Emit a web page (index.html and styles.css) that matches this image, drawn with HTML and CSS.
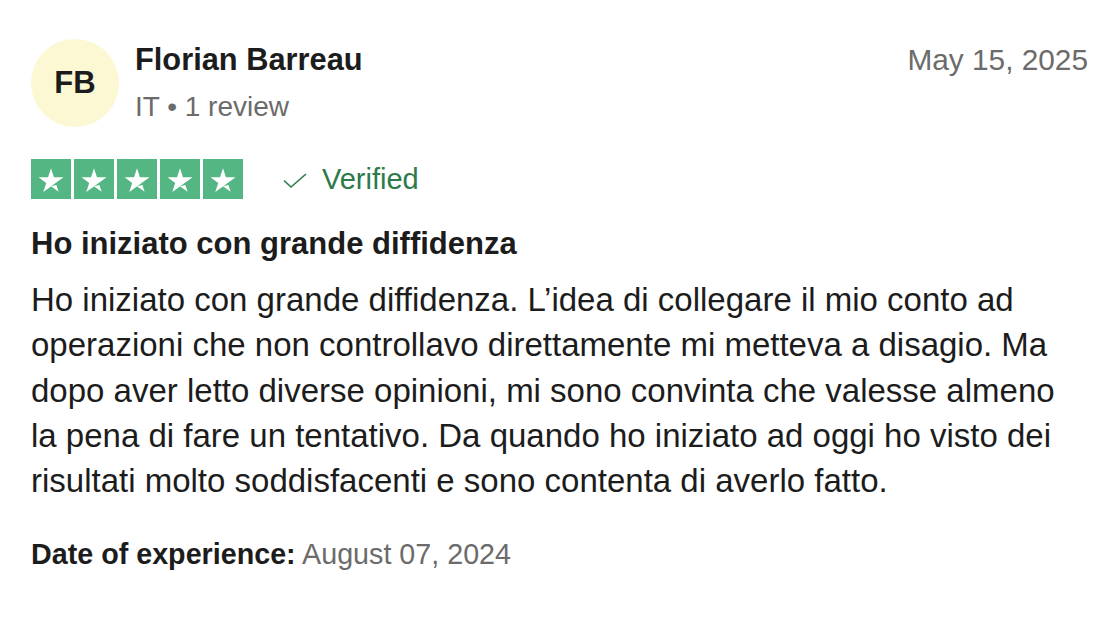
FILE: index.html
```html
<!DOCTYPE html>
<html>
<head>
<meta charset="utf-8">
<link rel="stylesheet" href="styles.css">
</head>
<body>
<article class="review">
  <header class="head">
    <div class="avatar">FB</div>
    <div class="who">
      <div class="name">Florian Barreau</div>
      <div class="meta">IT • 1 review</div>
    </div>
    <div class="date">May 15, 2025</div>
  </header>
  <div class="rating">
    <div class="stars">
      <span class="star"><svg viewBox="0 0 46 46"><path d="M23 31.4l6.2-1.6 2.6 8-8.8-6.4zm14.3-10.3H26.4L23 10.6l-3.4 10.5H8.7l8.8 6.4-3.4 10.4 8.8-6.4 5.4-3.9 8.8-6.4z" fill="#fff"/></svg></span>
      <span class="star"><svg viewBox="0 0 46 46"><path d="M23 31.4l6.2-1.6 2.6 8-8.8-6.4zm14.3-10.3H26.4L23 10.6l-3.4 10.5H8.7l8.8 6.4-3.4 10.4 8.8-6.4 5.4-3.9 8.8-6.4z" fill="#fff"/></svg></span>
      <span class="star"><svg viewBox="0 0 46 46"><path d="M23 31.4l6.2-1.6 2.6 8-8.8-6.4zm14.3-10.3H26.4L23 10.6l-3.4 10.5H8.7l8.8 6.4-3.4 10.4 8.8-6.4 5.4-3.9 8.8-6.4z" fill="#fff"/></svg></span>
      <span class="star"><svg viewBox="0 0 46 46"><path d="M23 31.4l6.2-1.6 2.6 8-8.8-6.4zm14.3-10.3H26.4L23 10.6l-3.4 10.5H8.7l8.8 6.4-3.4 10.4 8.8-6.4 5.4-3.9 8.8-6.4z" fill="#fff"/></svg></span>
      <span class="star"><svg viewBox="0 0 46 46"><path d="M23 31.4l6.2-1.6 2.6 8-8.8-6.4zm14.3-10.3H26.4L23 10.6l-3.4 10.5H8.7l8.8 6.4-3.4 10.4 8.8-6.4 5.4-3.9 8.8-6.4z" fill="#fff"/></svg></span>
    </div>
    <div class="verified">
      <svg class="check" viewBox="0 0 24 16"><path d="M1 7.5l7 6.5L23 1" fill="none" stroke="#2d7a4b" stroke-width="1.6"/></svg>
      <span>Verified</span>
    </div>
  </div>
  <h2 class="title">Ho iniziato con grande diffidenza</h2>
  <p class="body">Ho iniziato con grande diffidenza. L’idea di collegare il mio conto ad operazioni che non controllavo direttamente mi metteva a disagio. Ma dopo aver letto diverse opinioni, mi sono convinta che valesse almeno la pena di fare un tentativo. Da quando ho iniziato ad oggi ho visto dei risultati molto soddisfacenti e sono contenta di averlo fatto.</p>
  <p class="exp"><b>Date of experience:</b> <span>August 07, 2024</span></p>
</article>
</body>
</html>
```

FILE: styles.css
```css
html, body {
  margin: 0;
  padding: 0;
  background: #fff;
}
body {
  font-family: "Liberation Sans", Arial, sans-serif;
  color: #1c1c1c;
}
.review {
  padding: 39px 28px 0 31px;
}
.head {
  display: flex;
  align-items: flex-start;
}
.avatar {
  width: 88px;
  height: 88px;
  border-radius: 50%;
  background: #fdf8d4;
  display: flex;
  align-items: center;
  justify-content: center;
  font-weight: 700;
  font-size: 31px;
  color: #1c1c1c;
  flex: none;
}
.who {
  margin-left: 16px;
  flex: 1;
}
.name {
  font-weight: 700;
  font-size: 30.8px;
  line-height: 36px;
  margin-top: 3px;
}
.meta {
  font-size: 28px;
  line-height: 34px;
  margin-top: 12px;
  color: #6b6b6b;
}
.date {
  font-size: 29.8px;
  line-height: 36px;
  color: #6b6b6b;
  margin-top: 3px;
}
.rating {
  display: flex;
  align-items: center;
  margin-top: 32px;
}
.stars {
  display: flex;
  gap: 3px;
}
.star {
  width: 40px;
  height: 40px;
  background: #54b683;
  display: flex;
}
.star svg {
  width: 40px;
  height: 40px;
}
.verified {
  display: flex;
  align-items: center;
  margin-left: 40px;
  color: #2d7a4b;
  font-size: 29px;
  line-height: 36px;
}
.check {
  width: 24px;
  height: 16px;
  margin-right: 15px;
  margin-top: 4px;
}
.title {
  margin: 25px 0 0;
  font-size: 31px;
  line-height: 40px;
  font-weight: 700;
}
.body {
  margin: 13px 0 0;
  font-size: 33px;
  line-height: 45.3px;
  width: 1040px;
}
.exp {
  margin: 33px 0 0;
  font-size: 28.7px;
  line-height: 36px;
}
.exp span {
  color: #6b6b6b;
}
```
